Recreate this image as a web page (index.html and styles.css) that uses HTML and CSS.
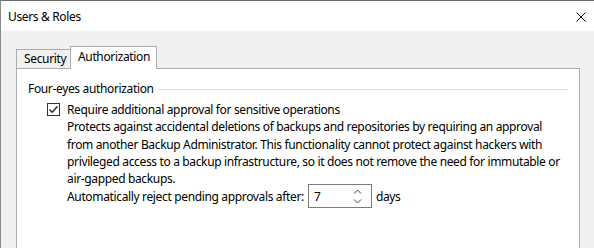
FILE: index.html
```html
<!DOCTYPE html>
<html lang="en">
<head>
  <meta charset="UTF-8" />
  <title>Users &amp; Roles</title>
  <link rel="stylesheet" href="styles.css">
</head>
<body>

  <div class="window">
    <div class="titlebar">
      <span class="title">Users &amp; Roles</span>
      <svg class="close" width="10" height="10" viewBox="0 0 10 10">
        <path d="M0.5 0.5 L9.5 9.5 M9.5 0.5 L0.5 9.5" stroke="#000" stroke-width="1" fill="none"/>
      </svg>
    </div>

    <div class="content">
      <div class="tabs">
        <div class="tab">Security</div>
        <div class="tab active">Authorization</div>
      </div>

      <div class="panel">
        <div class="group-head">
          <span>Four-eyes authorization</span>
          <div class="group-line"></div>
        </div>

        <div class="option">
          <span class="check">
            <svg width="11" height="11" viewBox="0 0 11 11">
              <path d="M1.5 5.5 L4.2 8.2 L9.5 2.2" stroke="#222" stroke-width="1.3" fill="none"/>
            </svg>
          </span>
          <div class="option-text">
            <div>Require additional approval for sensitive operations</div>
            <div class="hint">
              Protects against accidental deletions of backups and repositories by requiring an approval<br>
              from another Backup Administrator. This functionality cannot protect against hackers with<br>
              privileged access to a backup infrastructure, so it does not remove the need for immutable or<br>
              air-gapped backups.
            </div>
            <div class="reject-row">
              <span>Automatically reject pending approvals after:</span>
              <div class="spin">
                <span class="spin-value">7</span>
                <svg class="spin-arrows" width="9" height="15" viewBox="0 0 9 15">
                  <path d="M1 4.5 L4.5 1 L8 4.5 M1 10.5 L4.5 14 L8 10.5" stroke="#444" stroke-width="1" fill="none"/>
                </svg>
              </div>
              <span>days</span>
            </div>
          </div>
        </div>
      </div>
    </div>
  </div>

</body>
</html>
```

FILE: styles.css
```css
*{box-sizing:border-box;margin:0;padding:0}
body{
  width:594px;
  height:248px;
  overflow:hidden;
  font-family:"Noto Sans","Liberation Sans",sans-serif;
  font-size:12px;
  letter-spacing:-0.35px;
  color:#000;
}
.window{
  height:248px;
  border-top:1px solid #6e6e6e;
  border-left:1px solid #8a8a8a;
  display:flex;
  flex-direction:column;
}
.titlebar{
  flex:none;
  height:30px;
  background:#fff;
  display:flex;
  align-items:center;
  justify-content:space-between;
  padding:0 8px 0 7px;
}
.title{font-size:12px}
.close{margin-top:2px}
.content{
  flex:1;
  min-height:0;
  background:#f0f0f0;
  padding:15px 14px 0 15px;
  display:flex;
  flex-direction:column;
}
.tabs{
  flex:none;
  display:flex;
  align-items:flex-end;
  height:22px;
}
.tab{
  height:19px;
  padding:0 0 0 7px;
  width:55px;
  border:1px solid #adadad;
  border-bottom:none;
  background:#f0f0f0;
  line-height:17px;
}
.tab.active{
  height:23px;
  width:87px;
  margin-left:-1px;
  margin-bottom:-1px;
  background:#fff;
  padding-left:7px;
  line-height:20px;
  position:relative;
  z-index:1;
}
.panel{
  flex:1;
  background:#fff;
  border:1px solid #adadad;
  border-bottom:none;
  padding:11px 11px 0 11px;
}
.group-head{
  display:flex;
  align-items:center;
  gap:4px;
  line-height:17px;
}
.group-line{
  flex:1;
  border-top:1px solid #dcdcdc;
  margin-top:1px;
}
.option{
  display:flex;
  margin:4px 0 0 19px;
  gap:7px;
}
.check{
  width:13px;
  height:13px;
  margin-top:2px;
  border:1px solid #333;
  display:flex;
  align-items:center;
  justify-content:center;
  flex:none;
}
.option-text{line-height:17.3px;white-space:nowrap}
.reject-row{
  display:flex;
  align-items:center;
  gap:4px;
  margin-top:-3px;
}
.spin{
  width:64px;
  height:24px;
  border:1px solid #7a7a7a;
  background:#fff;
  display:flex;
  align-items:center;
  justify-content:space-between;
  padding:0 9px 0 5px;
}
.spin-arrows{margin-top:1px}
```
